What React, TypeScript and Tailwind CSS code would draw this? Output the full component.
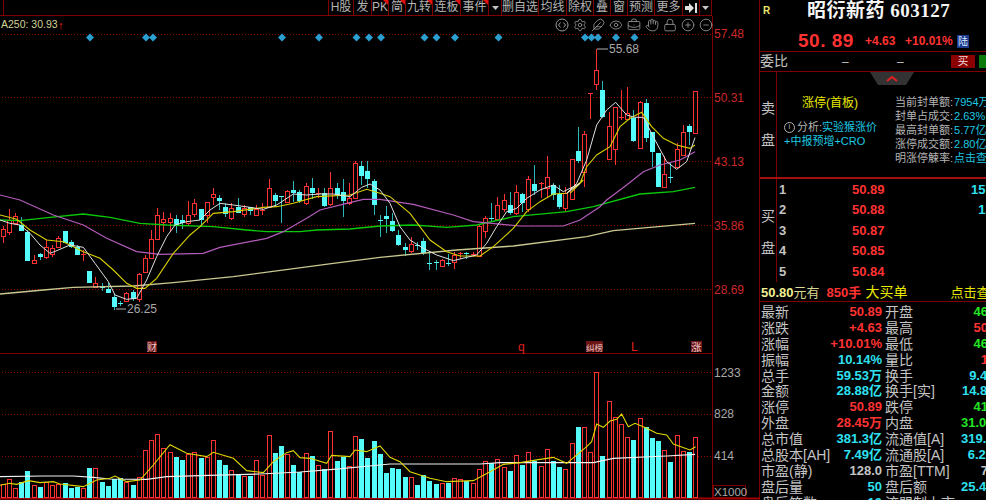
import { Eye, Settings, Feather, BriefcaseBusiness, Hand, Lock, CirclePlus, CircleMinus } from "lucide-react";

// [high, body top, body bottom, low, up?] in page pixels, one per trading day
const candles: [number, number, number, number, number][] = [
  [226, 229, 236, 243, 1], [209, 220, 232, 235, 1], [213, 216, 223, 225, 1], [217, 225, 231, 231, 0],
  [230, 232, 261, 261, 0], [255, 260, 263, 263, 1], [253, 254, 257, 260, 0], [239, 247, 257, 259, 1],
  [245, 248, 254, 257, 1], [236, 238, 247, 248, 1], [231, 231, 243, 243, 0], [240, 242, 247, 248, 0],
  [245, 247, 255, 255, 0], [250, 254, 255, 261, 1], [271, 271, 283, 283, 0], [277, 283, 287, 288, 1],
  [283, 287, 289, 291, 0], [283, 289, 293, 293, 0], [294, 297, 307, 310, 0], [301, 303, 304, 306, 0],
  [292, 293, 301, 302, 1], [290, 292, 299, 301, 0], [273, 274, 299, 302, 1], [255, 258, 272, 273, 1],
  [230, 239, 258, 259, 1], [208, 215, 239, 240, 1], [212, 219, 222, 232, 1], [213, 218, 222, 232, 1],
  [215, 219, 225, 233, 0], [215, 220, 223, 229, 0], [201, 215, 223, 225, 1], [199, 203, 214, 217, 1],
  [209, 209, 220, 227, 0], [202, 202, 215, 223, 1], [188, 194, 197, 205, 1], [195, 198, 201, 210, 0],
  [203, 207, 214, 217, 0], [203, 208, 218, 220, 1], [198, 207, 213, 213, 0], [205, 208, 214, 217, 1],
  [207, 207, 211, 215, 0], [205, 209, 215, 215, 1], [203, 210, 211, 215, 1], [179, 188, 207, 208, 1],
  [193, 195, 201, 207, 0], [196, 196, 197, 223, 0], [190, 191, 202, 203, 1], [181, 190, 193, 202, 0],
  [190, 192, 201, 203, 0], [183, 186, 203, 205, 1], [178, 188, 193, 199, 0], [188, 193, 194, 198, 1],
  [188, 193, 206, 207, 0], [172, 188, 204, 206, 1], [183, 188, 195, 199, 0], [179, 192, 201, 217, 0],
  [183, 198, 203, 205, 1], [161, 163, 198, 198, 1], [161, 166, 176, 185, 0], [161, 171, 179, 188, 0],
  [179, 181, 205, 215, 0], [215, 220, 222, 237, 0], [206, 216, 219, 233, 0], [213, 221, 231, 232, 0],
  [230, 235, 245, 246, 0], [243, 247, 250, 256, 0], [237, 244, 251, 253, 1], [242, 245, 245, 250, 0],
  [238, 241, 253, 255, 0], [253, 263, 264, 270, 0], [260, 262, 263, 270, 0], [259, 260, 266, 266, 1],
  [254, 263, 264, 266, 0], [252, 255, 262, 269, 1], [252, 253, 253, 259, 1], [252, 253, 255, 259, 0],
  [252, 254, 256, 257, 1], [225, 226, 256, 257, 1], [216, 218, 231, 238, 1], [203, 218, 219, 222, 0],
  [197, 205, 219, 220, 1], [194, 200, 209, 212, 1], [192, 205, 213, 215, 0], [185, 192, 213, 215, 1],
  [193, 194, 203, 212, 0], [176, 179, 209, 212, 1], [165, 184, 191, 195, 0], [182, 183, 184, 198, 1],
  [156, 177, 188, 198, 1], [183, 185, 195, 200, 0], [185, 194, 207, 209, 0], [187, 193, 208, 212, 1],
  [159, 159, 199, 199, 1], [127, 151, 161, 163, 0], [131, 134, 172, 187, 1], [93, 93, 94, 119, 1],
  [49, 70, 84, 90, 1], [81, 90, 117, 118, 0], [112, 126, 159, 160, 1], [107, 107, 149, 165, 1],
  [90, 117, 117, 120, 1], [87, 113, 119, 120, 1], [110, 118, 141, 142, 0], [101, 102, 148, 148, 1],
  [99, 103, 138, 142, 0], [132, 132, 152, 167, 0], [153, 153, 187, 187, 0], [156, 174, 187, 187, 1],
  [163, 177, 178, 183, 0], [143, 149, 167, 167, 1], [125, 132, 155, 155, 1], [124, 126, 132, 145, 0],
  [91, 91, 133, 133, 1],
];

const volumes = [
  484, 479, 488, 482, 471, 485, 487, 482, 485, 484, 483, 488, 487, 488, 468, 468, 482, 486, 479, 478, 482, 485, 477, 450,
  440, 434, 448, 452, 457, 460, 454, 452, 458, 457, 440, 460, 465, 470, 475, 476, 476, 460, 475, 435, 453, 446, 454, 465,
  472, 453, 456, 465, 469, 431, 461, 457, 466, 436, 439, 458, 441, 454, 473, 468, 469, 477, 477, 485, 475, 481, 484, 483,
  483, 478, 479, 481, 483, 469, 461, 463, 459, 467, 471, 455, 465, 452, 461, 466, 449, 461, 467, 469, 443, 427, 427, 452,
  372, 456, 401, 417, 424, 437, 440, 418, 427, 438, 441, 450, 462, 435, 451, 452, 437,
];

const diamonds = [90, 146, 153, 282, 319, 356.5, 369, 381, 424.5, 436.5, 455, 498.5, 585, 591.5, 598, 616, 634.5];
const priceGrid = [34, 97, 161, 225, 289];
const volumeGrid = [372, 414, 456];

const dayX = (i: number) => Math.round(2.7 + 6.183 * i) + 0.5;

// the curves were read off 3x crops, so map them back to page pixels here
const crop = (ox: number, oy: number, pts: number[][]) => pts.map(([x, y]) => `${ox + x / 3},${oy + y / 3}`).join(" ");

const ma5 =
  crop(0, 170, [[0, 150], [30, 160], [60, 165], [90, 190], [120, 225], [150, 250], [175, 240], [210, 225], [250, 232], [285, 280], [325, 335], [345, 375], [380, 388], [410, 385], [440, 330], [470, 260], [500, 200], [525, 165], [560, 155], [600, 150], [630, 120], [660, 100], [700, 105], [750, 112], [790, 118], [830, 105], [880, 72], [920, 75], [960, 72], [1000, 72], [1050, 80], [1085, 52], [1110, 42]]) +
  " " +
  crop(380, 170, [[0, 60], [30, 100], [60, 170], [90, 210], [130, 235], [170, 255], [220, 272], [260, 262], [290, 255], [320, 220], [350, 170], [380, 125], [410, 115], [440, 85], [480, 60], [520, 45], [550, 65], [600, 40]]) +
  " " +
  crop(560, 30, [[20, 490], [50, 460], [80, 390], [110, 285], [140, 240], [167, 217], [200, 255], [225, 262], [250, 262], [285, 330], [320, 395], [350, 418], [380, 395], [405, 323]]);

const ma10 =
  crop(0, 170, [[0, 135], [50, 148], [90, 180], [140, 210], [190, 215], [250, 245], [300, 265], [340, 300], [380, 340], [410, 355], [435, 355], [470, 325], [520, 250], [570, 195], [600, 170], [640, 130], [700, 125], [790, 112], [830, 110], [880, 100], [950, 80], [1050, 75], [1100, 58]]) +
  " " +
  crop(380, 170, [[0, 70], [30, 80], [90, 130], [150, 210], [200, 245], [240, 258], [300, 258], [340, 230], [400, 175], [440, 125], [480, 95], [520, 72], [560, 70], [610, 30]]) +
  " " +
  crop(560, 30, [[30, 490], [60, 460], [80, 410], [110, 375], [150, 350], [180, 290], [210, 265], [245, 247], [275, 290], [310, 325], [350, 345], [390, 355], [405, 345]]);

const ma30 =
  crop(0, 170, [[0, 75], [60, 90], [160, 135], [250, 165], [320, 205], [410, 245], [480, 253], [610, 250], [660, 232], [800, 205], [850, 185], [920, 145], [960, 120], [1040, 100], [1090, 88]]) +
  " " +
  crop(380, 170, [[0, 88], [100, 103], [220, 135], [280, 155], [420, 168], [550, 168], [600, 150], [660, 110]]) +
  " " +
  crop(560, 30, [[140, 510], [200, 465], [250, 425], [300, 405], [360, 390], [405, 365]]);

const ma60 =
  crop(0, 170, [[0, 150], [60, 152], [150, 142], [250, 132], [330, 142], [420, 160], [500, 165], [640, 170], [740, 180], [800, 185], [900, 185], [950, 180], [1050, 177]]) +
  " " +
  crop(380, 170, [[0, 168], [100, 165], [200, 172], [290, 165], [400, 140], [560, 125], [640, 110], [780, 72], [880, 65], [945, 52]]);

const ma250 =
  crop(0, 170, [[0, 372], [130, 360], [220, 352], [400, 348], [520, 338], [700, 320], [1000, 280]]) +
  " " +
  crop(380, 170, [[0, 262], [230, 240], [400, 228], [620, 200], [700, 182], [945, 160]]);

const volYellow =
  crop(0, 340, [[0, 436], [30, 430], [50, 433], [85, 422], [120, 428], [160, 425], [180, 432], [250, 440], [290, 420], [330, 415], [345, 408], [380, 425], [420, 420], [460, 375], [510, 314], [560, 340], [620, 350], [640, 337], [700, 355], [740, 392], [790, 398], [820, 365], [860, 338], [880, 332], [900, 353], [930, 355], [980, 370], [995, 346], [1050, 350], [1065, 330], [1100, 335]]) +
  " " +
  crop(380, 340, [[0, 318], [30, 352], [60, 365], [90, 395], [150, 415], [200, 425], [280, 422], [330, 395], [370, 373], [420, 368], [480, 358], [520, 352], [560, 370], [620, 320], [635, 305], [650, 252], [670, 262], [690, 243], [710, 238], [725, 222], [745, 260], [765, 250], [800, 265], [830, 280], [860, 285], [880, 312], [930, 330], [947, 320]]);

const volWhite =
  crop(0, 340, [[0, 410], [130, 408], [220, 408], [280, 412], [330, 417], [440, 418], [500, 410], [600, 407], [780, 402], [900, 396], [1000, 388]]) +
  " " +
  crop(380, 340, [[0, 375], [30, 372], [300, 372], [360, 368], [640, 368], [700, 355], [860, 348], [945, 343]]);

const tools = [
  { label: "H股", w: "w-[25px]" },
  { label: "发", w: "w-[18px]" },
  { label: "PK", w: "w-[17px]", corner: true },
  { label: "简", w: "w-[17px]", corner: true },
  { label: "九转", w: "w-[27px]", corner: true },
  { label: "连板", w: "w-[28px]", corner: true },
  { label: "事件", w: "w-[28px]", corner: true },
  { label: "caret", w: "w-[13px]" },
  { label: "删自选", w: "w-[37px]" },
  { label: "均线", w: "w-[28px]" },
  { label: "除权", w: "w-[27px]" },
  { label: "叠", w: "w-[17px]" },
  { label: "窗", w: "w-[17px]" },
  { label: "预测", w: "w-[27px]" },
  { label: "更多", w: "w-[28px]" },
  { label: "pin", w: "w-[17px]" },
  { label: "caret", w: "w-[12px]" },
];

const R = "text-[#ff3232]";
const C = "text-[#2fe0f0]";
const G = "text-[#22e622]";
const W = "text-[#c4c4c4]";

const quotes: [string, string, string, string, string, string][] = [
  ["最新", "50.89", R, "开盘", "46.26", G],
  ["涨跌", "+4.63", R, "最高", "50.89", R],
  ["涨幅", "+10.01%", R, "最低", "46.26", G],
  ["振幅", "10.14%", C, "量比", "1.32", R],
  ["总手", "59.53万", C, "换手", "9.48%", C],
  ["金额", "28.88亿", C, "换手[实]", "14.81%", C],
  ["涨停", "50.89", R, "跌停", "41.67", G],
  ["外盘", "28.45万", R, "内盘", "31.08万", G],
  ["总市值", "381.3亿", C, "流通值[A]", "319.5亿", C],
  ["总股本[AH]", "7.49亿", C, "流通股[A]", "6.28亿", C],
  ["市盈(静)", "128.0", W, "市盈[TTM]", "77.9", W],
  ["盘后量", "50", C, "盘后额", "25.45万", C],
  ["盘后笔数", "10", C, "流盟制上市", "", C],
];

const bids: [string, string, string][] = [
  ["1", "50.89", "1578"],
  ["2", "50.88", "135"],
  ["3", "50.87", ""],
  ["4", "50.85", ""],
  ["5", "50.84", ""],
];

const seal: [string, string][] = [
  ["当前封单额:", "7954万"],
  ["封单占成交:", "2.63%"],
  ["最高封单额:", "5.77亿"],
  ["涨停成交额:", "2.80亿"],
  ["明涨停觫率:", "点击查"],
];

function Toolbar() {
  return (
    <div className="flex h-[16px] w-[712px] border-b border-[#800000] text-[12px] leading-[15px] text-[#b4b4b4]">
      <div className="ml-[3px] flex-1 border-l border-[#800000]" />
      {tools.map((t, i) => (
        <div key={i} className={`relative flex shrink-0 items-center justify-center overflow-hidden border-l border-[#800000] ${t.w}`}>
          {t.label === "caret" ? (
            <svg width="7" height="4" viewBox="0 0 7 4">
              <polygon points="0,0 7,0 3.5,4" fill="#c4c4c4" />
            </svg>
          ) : t.label === "pin" ? (
            <svg width="12" height="10" viewBox="0 0 12 10">
              <polygon points="0,3 4,3 4,0 9,5 4,10 4,7 0,7" fill="#e0e0e0" />
              <rect x="10" y="0" width="2" height="10" fill="#e0e0e0" />
            </svg>
          ) : (
            t.label
          )}
          {t.corner && (
            <div className="absolute right-0 top-0 h-0 w-0 border-l-[5px] border-t-[5px] border-l-transparent border-t-[#e01010]" />
          )}
        </div>
      ))}
      <div className="w-px shrink-0 bg-[#800000]" />
    </div>
  );
}

function Chart() {
  return (
    <svg width="759" height="484" viewBox="0 16 759 484" className="block">
      {priceGrid.map((y) => (
        <line key={y} x1="2" x2="712" y1={y + 0.5} y2={y + 0.5} stroke="#8a0000" strokeDasharray="1 2" />
      ))}
      {volumeGrid.map((y) => (
        <line key={y} x1="2" x2="712" y1={y + 0.5} y2={y + 0.5} stroke="#8a0000" strokeDasharray="1 2" />
      ))}
      <line x1="0" x2="712" y1="353.5" y2="353.5" stroke="#800000" />
      <line x1="712.5" x2="712.5" y1="16" y2="498" stroke="#800000" />
      <line x1="0" x2="759" y1="498.5" y2="498.5" stroke="#a00000" strokeWidth="2" />

      {diamonds.map((x) => (
        <polygon key={x} points={`${x - 4},37.5 ${x},33.5 ${x + 4},37.5 ${x},41.5`} fill="#2a9fd0" />
      ))}

      <g shapeRendering="crispEdges">
        {candles.map(([h, t, b, l, up], i) => {
          const x = dayX(i);
          return (
            <g key={i}>
              <line x1={x} x2={x} y1={h} y2={l} stroke={up ? "#ff3232" : "#2ab8b8"} />
              {up ? (
                b - t < 3 ? (
                  <line x1={x - 2.5} x2={x + 2.5} y1={t + 0.5} y2={t + 0.5} stroke="#ff3232" />
                ) : (
                  <rect x={x - 2} y={t + 0.5} width="4" height={b - t} fill="#000" stroke="#ff3232" />
                )
              ) : b - t < 3 ? (
                <line x1={x - 2.5} x2={x + 2.5} y1={t + 0.5} y2={t + 0.5} stroke="#54fcfc" />
              ) : (
                <rect x={x - 2.5} y={t} width="5" height={b - t} fill="#54fcfc" />
              )}
            </g>
          );
        })}
        {volumes.map((top, i) => {
          const x = dayX(i);
          return candles[i][4] ? (
            <rect key={i} x={x - 2} y={top + 0.5} width="4" height={497 - top} fill="#000" stroke="#ff3232" />
          ) : (
            <rect key={i} x={x - 2.5} y={top} width="5" height={498 - top} fill="#54fcfc" />
          );
        })}
      </g>

      <polyline points={ma250} fill="none" stroke="#c8c890" strokeWidth="1.4" />
      <polyline points={ma60} fill="none" stroke="#0ac80a" strokeWidth="1.4" />
      <polyline points={ma30} fill="none" stroke="#b45cbc" strokeWidth="1.2" />
      <polyline points={ma10} fill="none" stroke="#d8d000" strokeWidth="1.1" />
      <polyline points={ma5} fill="none" stroke="#e0e0e0" strokeWidth="1" />
      <polyline points={volWhite} fill="none" stroke="#f0f0f0" strokeWidth="1.2" />
      <polyline points={volYellow} fill="none" stroke="#e0d800" strokeWidth="1.1" />

      <text x="1" y="28" fontSize="10.5" fill="#d0d098">A250: 30.93</text>
      <text x="58" y="29" fontSize="11" fill="#ff2020">↑</text>

      <line x1="597" x2="608" y1="49" y2="49" stroke="#b0b0b0" />
      <text x="609" y="53" fontSize="12" fill="#a8a8a8">55.68</text>
      <line x1="116" x2="126" y1="309" y2="309" stroke="#b0b0b0" />
      <text x="127" y="313" fontSize="12" fill="#a8a8a8">26.25</text>

      {[["57.48", 38], ["50.31", 102], ["43.13", 166], ["35.86", 230], ["28.69", 294]].map(([t, y]) => (
        <text key={t} x="714" y={y} fontSize="12" fill="#cc2828">{t}</text>
      ))}
      {[["1233", 377], ["828", 418], ["414", 460]].map(([t, y]) => (
        <text key={t} x="714" y={y} fontSize="12" fill="#a8a8a8">{t}</text>
      ))}
      <rect x="713.5" y="485.5" width="32" height="12" fill="#000" stroke="#800000" />
      <text x="714" y="496" fontSize="11.5" fill="#a8a8a8">X1000</text>

      <rect x="147" y="341" width="10" height="11" fill="#6a1414" />
      <text x="147" y="351" fontSize="10" fill="#e8c8c8">财</text>
      <text x="518" y="351" fontSize="12" fill="#e02020">q</text>
      <rect x="586" y="341" width="17" height="11" fill="#6a1414" />
      <text x="586" y="351" fontSize="8.5" fill="#e8c8c8">纠榜</text>
      <text x="631" y="351" fontSize="12" fill="#e02020">L</text>
      <rect x="691" y="341" width="11" height="11" fill="#6a1414" />
      <text x="691" y="351" fontSize="10.5" fill="#e8c8c8">涨</text>
    </svg>
  );
}

function ChartTools() {
  const cls = "h-[14px] w-[18px] shrink-0";
  return (
    <div className="absolute left-[553px] top-[18px] flex items-center text-[#9a9a9a]">
      <svg viewBox="0 0 14 14" className={cls} fill="none" stroke="currentColor">
        <circle cx="7" cy="7" r="6" />
        <path d="M5.5 4.5 3.5 7l2 2.5M8.5 4.5l2 2.5-2 2.5" />
      </svg>
      <Settings className={cls} strokeWidth={1.4} />
      <Feather className={cls} strokeWidth={1.4} />
      <Eye className={cls} strokeWidth={1.4} />
      <BriefcaseBusiness className={cls} strokeWidth={1.4} />
      <Hand className={cls} strokeWidth={1.4} />
      <Lock className={cls} strokeWidth={1.4} />
      <CirclePlus className={cls} strokeWidth={1.4} />
      <CircleMinus className={cls} strokeWidth={1.4} />
    </div>
  );
}

function SidePanel() {
  return (
    <div className="h-[500px] w-[247px] shrink-0 border-l border-[#800000]">
      {/* title + price */}
      <div className="flex h-[26px] items-center pb-[6px]">
        <span className="ml-[3px] w-[44px] text-[10px] font-bold text-[#e8e870]">R</span>
        <span className="[font-family:'Liberation_Serif','Noto_Sans_CJK_SC',serif] text-[19px] font-bold leading-none tracking-[0.5px] text-[#f4f4f4]">
          昭衍新药 603127
        </span>
      </div>
      <div className="flex h-[26px] items-center border-b border-[#800000] pt-[5px] text-[#ff3232]">
        <span className="ml-[38px] w-[67px] text-[19px] font-bold tracking-[0.5px]">50. 89</span>
        <span className="w-[40px] text-[12px] font-bold">+4.63</span>
        <span className="w-[52px] text-[12px] font-bold">+10.01%</span>
        <span className="flex h-[13px] w-[12px] items-center justify-center bg-[#1c3a8c] text-[10px] text-[#d8e8ff]">陆</span>
      </div>

      {/* 委比 */}
      <div className="flex h-[20px] items-center border-b border-[#800000] text-[#c4c4c4]">
        <span className="w-[82px] text-[14px]">委比</span>
        <span className="w-[55px] text-[12px]">–</span>
        <span className="w-[54px] text-[12px]">–</span>
        <span className="flex h-[13px] w-[24px] items-center justify-center bg-[#8b0000] text-[11px] text-[#f0d8d8]">买</span>
        <span className="ml-[4px] h-[13px] w-[24px] bg-[#0a7a0a]" />
      </div>

      {/* 卖盘 + limit-up box */}
      <div className="relative flex h-[105px]">
        <div className="flex w-[17px] shrink-0 flex-col items-center gap-[18px] border-r border-[#800000] pt-[29px] text-[14px] leading-[14px] text-[#c4c4c4]">
          <span>卖</span>
          <span>盘</span>
        </div>
        <svg width="44" height="13" viewBox="0 0 44 13" className="absolute left-[110px] top-0">
          <polygon points="0,0 44,0 36,13 8,13" fill="#333" />
          <polyline points="17,9 22,5 27,9" fill="none" stroke="#e82020" strokeWidth="2" />
        </svg>
        <div className="w-[118px] shrink-0 pl-[7px]">
          <div className="mt-[24px] pl-[18px] text-[12px] leading-[14px] text-[#e8e800]">涨停(首板)</div>
          <div className="mt-[10px] flex items-center text-[11px] leading-[14px] text-[#b4b4b4]">
            <span className="mr-[2px] flex h-[11px] w-[11px] items-center justify-center rounded-full border border-[#b4b4b4] text-[8px] leading-none">i</span>
            分析:<span className="text-[#1cc8e0]">实验猴涨价</span>
          </div>
          <div className="text-[11px] leading-[14px] text-[#1cc8e0]">+中报预增+CRO</div>
        </div>
        <div className="pt-[23px]">
          {seal.map(([k, v]) => (
            <div key={k} className="flex h-[14px] items-center whitespace-nowrap text-[11px] text-[#b4b4b4]">
              {k}
              <span className="ml-[1px] text-[#1cc8e0]">{v}</span>
            </div>
          ))}
        </div>
      </div>

      <div className="h-[2px] bg-[#a01010]" />

      {/* 买盘 */}
      <div className="flex h-[103px]">
        <div className="flex w-[17px] shrink-0 flex-col items-center gap-[18px] border-r border-[#800000] pt-[30px] text-[14px] leading-[14px] text-[#c4c4c4]">
          <span>买</span>
          <span>盘</span>
        </div>
        <div className="flex-1">
          {bids.map(([n, p, v]) => (
            <div key={n} className="flex h-[20.5px] items-center text-[13px] font-bold">
              <span className="w-[75px] shrink-0 pl-[2px] text-[#c4c4c4]">{n}</span>
              <span className="w-[45px] shrink-0 text-[#ff3232]">{p}</span>
              <span className="w-[105px] shrink-0 pr-[2px] text-right text-[#2fe0f0]">{v}</span>
            </div>
          ))}
        </div>
      </div>

      <div className="flex h-[20px] items-center whitespace-nowrap border-b border-[#800000] pl-[1px] pt-[2px] text-[13px]">
        <span className="font-bold text-[#f0f090]">50.80</span>
        <span className="w-[33px] text-[#d8d890]">元有</span>
        <span className="w-[39px] font-bold text-[#ff3232]">850手</span>
        <span className="w-[85px] text-[14px] text-[#e8e800]">大买单</span>
        <span className="text-[#e8e800]">点击查看</span>
      </div>

      {/* quote table */}
      <div className="pt-[2px]">
        {quotes.map(([a, av, ac, b, bv, bc]) => (
          <div key={a} className="flex h-[15.9px] items-center whitespace-nowrap text-[14px] leading-[16px] text-[#c4c4c4]">
            <span className="w-[60px] shrink-0 pl-[1px]">{a}</span>
            <span className={`w-[62px] shrink-0 text-right text-[13px] font-bold ${ac}`}>{av}</span>
            <span className="ml-[3px] w-[76px] shrink-0">{b}</span>
            <span className={`w-[45px] shrink-0 text-right text-[13px] font-bold ${bc}`}>{bv}</span>
          </div>
        ))}
      </div>
    </div>
  );
}

export default function App() {
  return (
    <div className="flex h-[500px] w-[986px] overflow-hidden bg-black [font-family:'Liberation_Sans','Noto_Sans_CJK_SC',sans-serif]">
      <div className="relative h-[500px] w-[759px] shrink-0">
        <Toolbar />
        <Chart />
        <ChartTools />
      </div>
      <SidePanel />
    </div>
  );
}
